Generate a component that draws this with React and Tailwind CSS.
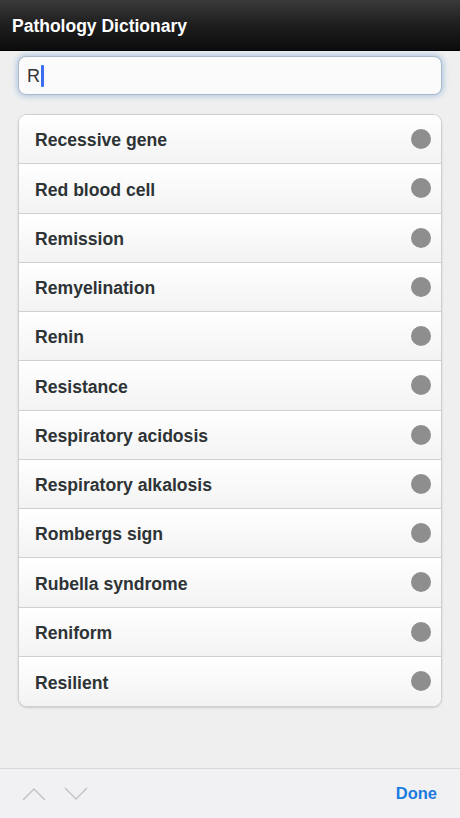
import React from "react";

const items = [
  "Recessive gene",
  "Red blood cell",
  "Remission",
  "Remyelination",
  "Renin",
  "Resistance",
  "Respiratory acidosis",
  "Respiratory alkalosis",
  "Rombergs sign",
  "Rubella syndrome",
  "Reniform",
  "Resilient",
];

export default function App() {
  return (
    <div
      className="w-[460px] h-[818px] bg-[#efefef] flex flex-col overflow-hidden"
      style={{ fontFamily: '"Liberation Sans", Arial, sans-serif' }}
    >
      <div className="h-[51px] shrink-0 bg-gradient-to-b from-[#3a3a3a] via-[#1e1e1e] to-[#0c0c0c] flex items-center px-3 pt-[3px] border-b border-[#000]">
        <span className="text-white font-bold text-[17.5px]">Pathology Dictionary</span>
      </div>
      <div className="flex-1 flex flex-col px-[18px]">
        <div className="mt-[5px] h-[39px] rounded-[8px] bg-[#fbfbfb] border border-[#a9b9c9] shadow-[0_0_5px_2px_rgba(120,165,215,0.45)] flex items-center pl-[8px]">
          <span className="text-[#333] text-[18px] leading-none">R</span>
          <span className="w-[3px] h-[22px] bg-[#3a6ef0] ml-[1px] rounded-[1px]"></span>
        </div>
        <div className="mt-[19px] rounded-[9px] bg-white border border-[#cfcfcf] shadow-[0_1px_2px_rgba(0,0,0,0.15)] overflow-hidden">
          {items.map((t, i) => (
            <div
              key={t}
              className={`h-[49.25px] flex items-center justify-between pl-[16px] pr-[10px] bg-gradient-to-b from-[#ffffff] to-[#f3f3f3] ${i < items.length - 1 ? "border-b border-[#d0d0d0]" : ""}`}
            >
              <span className="text-[17.6px] font-bold text-[#2e3335] pt-[3px]">{t}</span>
              <span className="w-[20px] h-[20px] rounded-full bg-[#8e8e8e]"></span>
            </div>
          ))}
        </div>
      </div>
      <div className="h-[50px] shrink-0 border-t border-[#d8d8da] bg-[#f1f1f3] flex items-center px-[22px]">
        <svg width="24" height="14" viewBox="0 0 24 14" className="mr-[18px]">
          <polyline points="1,13 12,2 23,13" fill="none" stroke="#c4c4c6" strokeWidth="1.5" />
        </svg>
        <svg width="24" height="14" viewBox="0 0 24 14">
          <polyline points="1,1 12,12 23,1" fill="none" stroke="#c4c4c6" strokeWidth="1.5" />
        </svg>
        <span className="ml-auto mr-[1px] text-[#1a7be0] text-[16.5px] font-bold">Done</span>
      </div>
    </div>
  );
}
